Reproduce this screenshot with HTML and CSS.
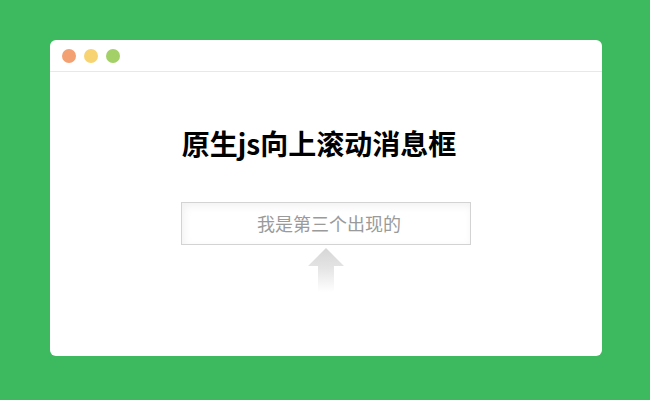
FILE: index.html
```html
<!DOCTYPE html>
<html lang="zh-CN">
<head>
    <meta charset="UTF-8">
    <meta name="viewport" content="width=device-width, initial-scale=1.0">
    <title>原生js向上滚动消息框</title>
    <link rel="stylesheet" href="styles.css">
</head>
<body>

    <div class="window">
        <div class="window-bar">
            <span class="dot dot-red"></span>
            <span class="dot dot-yellow"></span>
            <span class="dot dot-green"></span>
        </div>

        <div class="window-body">
            <h1>原生js向上滚动消息框</h1>

            <div class="msg-box">
                <div class="msg">我是第三个出现的</div>
            </div>

            <svg class="arrow" width="36" height="44" viewBox="0 0 36 44">
                <defs>
                    <linearGradient id="fade" x1="0" y1="0" x2="0" y2="1">
                        <stop offset="0" stop-color="#d6d6d6"/>
                        <stop offset="0.45" stop-color="#e4e4e4"/>
                        <stop offset="1" stop-color="#ffffff"/>
                    </linearGradient>
                </defs>
                <path d="M18 0 L36 18 L26 18 L26 44 L10 44 L10 18 L0 18 Z" fill="url(#fade)"/>
            </svg>
        </div>
    </div>

</body>
</html>
```

FILE: styles.css
```css
body {
    margin: 0;
    background-color: #3dba5f;
    font-family: "Noto Sans CJK SC", "Liberation Sans", sans-serif;
    height: 400px;
    padding-top: 40px;
    box-sizing: border-box;
}
.window {
    width: 552px;
    height: 316px;
    margin-left: 50px;
    background-color: #fff;
    border-radius: 6px;
    overflow: hidden;
}
.window-bar {
    height: 31px;
    border-bottom: 1px solid #e8e8e8;
    display: flex;
    align-items: center;
    gap: 8px;
    padding-left: 12px;
}
.dot {
    width: 14px;
    height: 14px;
    border-radius: 50%;
}
.dot-red { background-color: #f3a073; }
.dot-yellow { background-color: #f8d372; }
.dot-green { background-color: #a3d168; }
.window-body {
    display: flex;
    flex-direction: column;
    align-items: center;
}
h1 {
    margin: 53px 0 0;
    font-size: 28px;
    line-height: 36px;
    font-weight: bold;
    color: #000;
    padding-right: 14px;
}
.msg-box {
    margin-top: 41px;
    width: 288px;
    height: 41px;
    border: 1px solid #d3d3d3;
    box-shadow: inset 2px 3px 8px rgba(0, 0, 0, 0.06);
}
.msg {
    text-align: center;
    font-size: 18px;
    line-height: 41px;
    color: #9a9a9a;
    padding-left: 6px;
}
.arrow {
    display: block;
    margin-top: 3px;
}
```
